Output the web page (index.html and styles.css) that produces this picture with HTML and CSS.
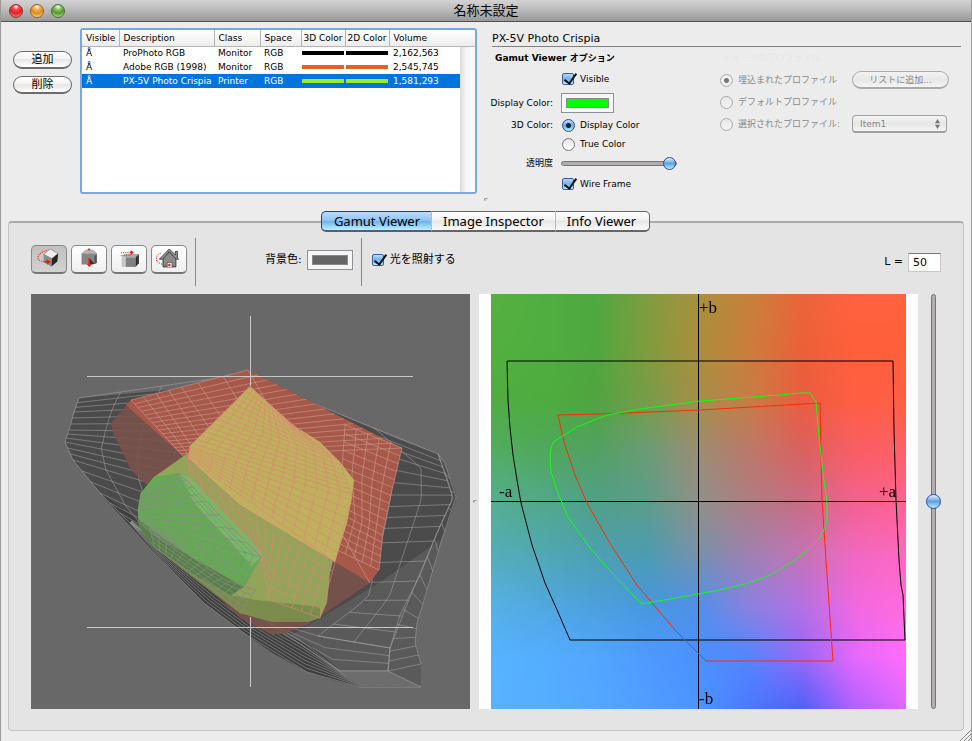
FILE: index.html
```html
<!DOCTYPE html>
<html lang="ja">
<head>
    <meta charset="UTF-8">
    <meta name="viewport" content="width=device-width, initial-scale=1.0">
    <title>名称未設定</title>
    <link rel="stylesheet" href="styles.css">
</head>
<body>
    <header class="titlebar">
        <div class="lights">
            <button class="light red" aria-label="Close"></button>
            <button class="light yellow" aria-label="Minimize"></button>
            <button class="light green" aria-label="Zoom"></button>
        </div>
        <h1>名称未設定</h1>
    </header>

    <section class="top">
        <div class="list-buttons">
            <button class="pill">追加</button>
            <button class="pill">削除</button>
        </div>

        <div class="profile-list">
            <table>
                <colgroup>
                    <col class="c-visible"><col class="c-desc"><col class="c-class"><col class="c-space">
                    <col class="c-color"><col class="c-color"><col>
                </colgroup>
                <thead>
                    <tr><th>Visible</th><th>Description</th><th>Class</th><th>Space</th><th>3D Color</th><th>2D Color</th><th>Volume</th></tr>
                </thead>
                <tbody>
                    <tr><td>Å</td><td>ProPhoto RGB</td><td>Monitor</td><td>RGB</td><td class="swatch black"><i></i></td><td class="swatch black"><i></i></td><td>2,162,563</td></tr>
                    <tr><td>Å</td><td>Adobe RGB (1998)</td><td>Monitor</td><td>RGB</td><td class="swatch orange"><i></i></td><td class="swatch orange"><i></i></td><td>2,545,745</td></tr>
                    <tr class="selected"><td>Å</td><td>PX-5V Photo Crispia</td><td>Printer</td><td>RGB</td><td class="swatch lime"><i></i></td><td class="swatch lime"><i></i></td><td>1,581,293</td></tr>
                </tbody>
            </table>
            <div class="scroll-track"></div>
        </div>

        <div class="options">
            <h2>PX-5V Photo Crispia</h2>
            <div class="option-columns">
                <div class="viewer-options">
                    <h3>Gamut Viewer オプション</h3>
                    <div class="form-grid">
                        <span></span>
                        <label class="check"><input type="checkbox" checked>Visible</label>
                        <label for="display-color">Display Color:</label>
                        <button class="well" id="display-color" aria-label="Display Color"><i class="fill-green"></i></button>
                        <span>3D Color:</span>
                        <label class="radio"><input type="radio" name="color3d" checked>Display Color</label>
                        <span></span>
                        <label class="radio"><input type="radio" name="color3d">True Color</label>
                        <label for="opacity">透明度</label>
                        <input class="slider" type="range" id="opacity" min="0" max="100" value="100">
                        <span></span>
                        <label class="check"><input type="checkbox" checked>Wire Frame</label>
                    </div>
                </div>
                <div class="image-options">
                    <h3>イメージのプロファイル</h3>
                    <div class="image-grid">
                        <label class="radio"><input type="radio" name="profile" checked disabled>埋込まれたプロファイル</label>
                        <button class="pill" disabled>リストに追加...</button>
                        <label class="radio"><input type="radio" name="profile" disabled>デフォルトプロファイル</label>
                        <span></span>
                        <label class="radio"><input type="radio" name="profile" disabled>選択されたプロファイル:</label>
                        <div class="popup">
                            <select disabled aria-label="プロファイル"><option>Item1</option></select>
                            <svg viewBox="0 0 6 12"><path d="M3 0 6 5H0zM3 12 6 7H0z"/></svg>
                        </div>
                    </div>
                </div>
            </div>
        </div>
    </section>

    <div class="splitter"><i></i></div>

    <main class="panel">
        <nav class="tabs">
            <button class="active">Gamut Viewer</button>
            <button>Image Inspector</button>
            <button>Info Viewer</button>
        </nav>

        <div class="toolbar">
            <div class="tools">
                <button class="tool pressed" aria-label="Rotate">
                    <svg viewBox="0 0 108 87">
                        <path fill="#eee" stroke="#777" stroke-width="2" d="M36 28 58 10 84 25 64 42z"/>
                        <path fill="#8c8c8c" d="M36 28 64 42 62 69 36 54z"/>
                        <path fill="#262626" d="M64 42 85 25 82 52 62 69z"/>
                        <path class="dots" d="M46 15C30 18 16 30 17 40S30 52 44 53"/>
                        <path fill="#f21a00" d="M46 44 61 53 48 62v-6h-8v-6h6z"/>
                    </svg>
                </button>
                <button class="tool" aria-label="Move vertical">
                    <svg viewBox="0 0 108 87">
                        <path fill="#b4b4b4" stroke="#8a8a8a" stroke-width="2" d="M30 26 42 14H68L80 26z"/>
                        <path fill="#868686" d="M29 26H80V57L68 62H29z"/>
                        <path fill="#333" d="M57 42 73 60H57z"/>
                        <path fill="#555" d="M72 34 80 28V57L72 60z"/>
                        <path fill="#f21a00" d="M54 7 60 14H48zM52 40h5v20h7l-9 10-9-10h6z"/>
                    </svg>
                </button>
                <button class="tool" aria-label="Move horizontal">
                    <svg viewBox="0 0 108 87">
                        <path fill="#c8c8c8" d="M29 32 43 36V70H29z"/>
                        <path fill="#aaa" d="M29 32 42 27H87L76 38H43z"/>
                        <path fill="#808080" d="M43 38H76V70H43z"/>
                        <path fill="#2e2e2e" d="M76 38 87 27V58L76 70z"/>
                        <path class="dots" d="M28 22H56"/>
                        <path fill="#f21a00" d="M56 19H60V13L70 22 60 31V24H56z"/>
                        <path fill="none" stroke="#444" stroke-width="2" stroke-dasharray="3 3" d="M26 31H60"/>
                    </svg>
                </button>
                <button class="tool" aria-label="Home">
                    <svg viewBox="0 0 108 87">
                        <path fill="#8a8a8a" stroke="#333" stroke-width="3" d="M34 40V70H77V40L55 20z"/>
                        <path fill="#999" stroke="#333" stroke-width="3" d="M75 30V18H82V40L86 44H78L55 19 33 44H22L55 10 75 30"/>
                        <path fill="#fff" stroke="#333" stroke-width="2" d="M48 70V55H64V70"/>
                        <path stroke="#f21a00" stroke-width="4" d="M50 64H60M55 59V69"/>
                        <path class="dots" d="M26 25C16 28 11 34 12 44S24 60 44 64"/>
                    </svg>
                </button>
            </div>
            <div class="background-color">
                <label for="bg-color">背景色:</label>
                <button class="well" id="bg-color" aria-label="背景色"><i class="fill-gray"></i></button>
            </div>
            <label class="check large"><input type="checkbox" checked>光を照射する</label>
            <div class="lightness">
                <label for="l-value">L =</label>
                <input type="text" id="l-value" value="50">
            </div>
        </div>

        <div class="viewers">
            <svg class="gamut3d" viewBox="31 294 439 415" role="img" aria-label="3D gamut">
                <!-- ProPhoto RGB -->
                <path fill="#4b4b4b" d="M79 398 190 388 250 373 310 402 400 440 438 454 445 464 456 494 456 500 440 545 427 590 417 623 415 643 421 664 421 687H360L340 682 307 672 273 653 244 633 204 603 174 573 148 545 100 493 73 460 65 442z"/>
                <path fill="#5a5a5a" d="M379 583 440 540 427 590 417 623 415 643 421 664V687H360L318 660 290 636z"/>
                <path fill="#3e3e3e" d="M100 493 140 520 190 570 250 615 310 645 360 687 340 682 307 672 273 653 244 633 204 603 174 573 148 545z"/>
                <g id="wire-black" class="wire light"></g>
                <!-- Adobe RGB -->
                <path fill="#79524a" fill-opacity=".9" d="M131 400 248 370 402 448 392 490 383 533 379 570 370 583 327 612 307 625 283 634H270L240 618 218 597 147 485 131 470 113 433 111 423z"/>
                <path fill="#ab5948" fill-opacity=".95" d="M131 400 248 370 402 448 392 490 383 533 379 570 370 583 335 562 184 457 126 405z"/>
                <g id="wire-red" class="wire pink"></g>
                <!-- printer profile -->
                <path fill="#93a358" d="M188 453 154 477 141 493 138 510 139 527 154 547 198 577 231 595 240 613 273 622H307L320 618 327 603 330 573 337 543 270 500z"/>
                <path fill="#7c8c4c" d="M154 547 198 577 231 595 256 600 320 607 320 618 307 622H273L240 613z"/>
                <path fill="#c0b05e" d="M250 386 190 446 188 458 240 505 335 562 347 523 352 497 354 480 340 462 320 442 293 425z"/>
                <path fill="#63ab50" d="M141 493 154 477 179 473 191 486 261 557 244 587 231 595 198 577 154 547 139 527 138 510z"/>
                <path fill="#577f48" d="M139 520 190 556 244 587 231 595 198 577 154 547 139 527z"/>
                <path fill="#77b866" d="M179 473 191 478 261 551V557L252 566 196 506z"/>
                <g id="wire-yellow" class="wire rose"></g>
                <g id="wire-green" class="wire gray"></g>
                <path class="axes" d="M87 376H413M250 316V386M87 627H413M250 617V687"/>
            </svg>

            <div class="divider"><i></i></div>

            <div class="ab-plane">
                <canvas id="ab-colors" width="415" height="415"></canvas>
                <svg viewBox="491 294 415 415" role="img" aria-label="a-b plane">
                    <path class="crisp" stroke="#000" d="M491 501H906M698 294V709"/>
                    <path stroke="#000" d="M507 361 508 400 510 428 513 455 517 480 521 503 532 545 545 583 558 612 570 640H905L903 595 901 585 899 560 896 500 894 430 893 361z"/>
                    <path stroke="#ff2a08" d="M558 415 564 442 575 475 587 503 611 545 637 585 675 630 706 661H833L826 560 822 500 820 403 700 410 600 414z"/>
                    <path stroke="#10ff10" d="M553 442 551 448 550 457 551 472 558 493 568 517 590 548 612 573 642 604 720 590 745 584 763 578 778 571 790 563 802 555 810 548 818 540 823 532 826 524 827 520V503L823 473 819 437 816 402 810 393H800L780 395 700 401 640 409 607 415 577 427z"/>
                    <text x="699" y="313">+b</text>
                    <text x="699" y="704">-b</text>
                    <text x="499" y="497">-a</text>
                    <text x="879" y="497">+a</text>
                </svg>
            </div>

            <input class="slider vertical" type="range" min="0" max="100" value="50" aria-label="L">
        </div>
    </main>

    <svg class="grip" viewBox="0 0 12 12"><path d="M1 12 12 1M5 12 12 5M9 12 12 9"/></svg>

    <script src="script.js"></script>
</body>
</html>
```
FILE: styles.css
```css
* {
    box-sizing: border-box;
}
body {
    margin: 0;
    min-height: 100vh;
    background: #ececec;
    border: solid #9a9a9a;
    border-width: 0 1px;
    font-family: "DejaVu Sans", "Noto Sans CJK JP", sans-serif;
    font-size: 9px;
    line-height: 14px;
    color: #000;
}
h1, h2, h3 {
    margin: 0;
    font-weight: normal;
}
button, input, select {
    font: inherit;
    color: inherit;
    margin: 0;
    padding: 0;
}

/* title bar */
.titlebar {
    display: grid;
    grid-template-columns: 1fr auto 1fr;
    align-items: center;
    height: 22px;
    margin: 0 -1px;
    background: linear-gradient(#d2d2d2, #c4c4c4 30%, #999);
    border-bottom: 1px solid #515151;
}
.titlebar h1 {
    font-size: 13px;
    line-height: 20px;
}
.lights {
    display: flex;
    gap: 7px;
    padding-left: 9px;
}
.light {
    width: 14px;
    height: 14px;
    border: 1px solid #666;
    border-radius: 50%;
}
.red {
    background: radial-gradient(circle at 50% 15%, #fff 0, #f45 25%, #d22 55%, #fa9c98 100%);
    border-color: #8c3030;
}
.yellow {
    background: radial-gradient(circle at 50% 15%, #fff 0, #f6b04c 25%, #e08a20 55%, #ffe9a0 100%);
    border-color: #94602a;
}
.green {
    background: radial-gradient(circle at 50% 15%, #fff 0, #8cc860 25%, #559a30 55%, #d0f4a0 100%);
    border-color: #44702c;
}

/* profile list and its options */
.top {
    display: flex;
    padding: 6px 10px 0 12px;
}
.list-buttons {
    display: flex;
    flex-direction: column;
    gap: 7px;
    padding-top: 23px;
    margin-right: 8px;
}
.pill {
    width: 59px;
    height: 18px;
    border: 1px solid #6c6c6c;
    border-width: 1px 1px 2px;
    border-radius: 9px;
    background: linear-gradient(#fff, #f4f4f4 45%, #e6e6e6 50%, #fff);
    font-size: 11px;
    line-height: 14px;
}
.pill:disabled {
    width: 97px;
    border-color: #aaa;
    background: linear-gradient(#f2f2f2, #e8e8e8 50%, #f4f4f4);
    color: #8a8a8a;
    font-size: 9px;
}
.profile-list {
    display: flex;
    flex: 0 1 397px;
    height: 166px;
    position: relative;
    border: 2px solid #7aa8dc;
    border-radius: 3px;
    background: #fff;
}
table {
    width: 100%;
    align-self: flex-start;
    border-collapse: collapse;
    table-layout: fixed;
    white-space: nowrap;
}
.c-visible { width: 37px; }
.c-desc { width: 95px; }
.c-class { width: 46px; }
.c-space { width: 41px; }
.c-color { width: 44px; }
th {
    height: 16px;
    padding: 0 0 0 4px;
    border-right: 1px solid #b4b4b4;
    border-bottom: 1px solid #b4b4b4;
    background: linear-gradient(#fff, #f6f6f6 50%, #ececec);
    font-weight: normal;
    text-align: left;
    line-height: 14px;
}
th:nth-child(5), th:nth-child(6) {
    padding-left: 2px;
}
th:last-child {
    border-right: 0;
}
td {
    height: 14px;
    padding: 0 0 0 4px;
    line-height: 13px;
}
.selected td {
    background: #0274dd;
    color: #fff;
}
.swatch {
    padding: 0 1px;
}
.swatch i {
    display: block;
    height: 4px;
}
.black i { background: #000; }
.orange i { background: #e6611b; }
.lime i { background: #97ec2c; }
.scroll-track {
    position: absolute;
    top: 17px;
    right: 0;
    bottom: 0;
    width: 15px;
    background: linear-gradient(90deg, #ddd, #f4f4f4 40%, #fff);
}
.options {
    flex: 1;
    padding: 3px 0 0 15px;
}
.options h2 {
    font-size: 11px;
    line-height: 15px;
    border-bottom: 1px solid #808080;
}
.option-columns {
    display: flex;
    justify-content: space-between;
}
.options h3 {
    padding: 4px 0 0 3px;
    font-size: 9px;
    font-weight: bold;
}
.viewer-options {
    flex: 0 1 188px;
}
.form-grid {
    display: grid;
    grid-template-columns: 61px 1fr;
    grid-template-rows: 28px 20px 24px 14px 24px 18px;
    column-gap: 8px;
    align-items: center;
}
.form-grid > :nth-child(odd) {
    justify-self: end;
    white-space: nowrap;
}
.image-options {
    flex: 0 1 242px;
}
.options .image-options h3 {
    color: #e7e7e7;
    font-weight: normal;
}
.image-grid {
    display: grid;
    grid-template-columns: 1fr 109px;
    grid-template-rows: 30px 14px 30px;
    align-items: center;
    color: #8a8a8a;
    white-space: nowrap;
}
.check, .radio {
    display: flex;
    align-items: center;
    gap: 5px;
}
input[type="checkbox"], input[type="radio"] {
    appearance: none;
    flex: none;
    width: 13px;
    height: 13px;
    margin-left: 1px;
    border: 1px solid #777;
    background: linear-gradient(#e4e4e4, #fff);
}
input[type="checkbox"] {
    position: relative;
    width: 12px;
    height: 12px;
    margin-right: 1px;
    border-radius: 2px;
}
input[type="checkbox"]:checked {
    border-color: #3d5f9c;
    background: linear-gradient(#b8d6f4, #6fb2f0 50%, #b8f0ff);
}
input[type="checkbox"]:checked::after {
    content: "";
    position: absolute;
    left: 4px;
    top: -3px;
    width: 5px;
    height: 11px;
    border: solid #111;
    border-width: 0 2px 2px 0;
    transform: rotate(36deg);
}
input[type="radio"] {
    border-radius: 50%;
}
input[type="radio"]:checked {
    border-color: #2f4c90;
    background: radial-gradient(circle, #123 0 2px, transparent 3px), linear-gradient(#c4dcf8, #69abee 50%, #b4f0ff);
}
input[type="radio"]:disabled {
    border-color: #aaa;
    background: linear-gradient(#e8e8e8, #f4f4f4);
}
input[type="radio"]:checked:disabled {
    background: radial-gradient(circle, #777 0 2px, #eee 3px);
}
.well {
    display: flex;
    width: 53px;
    height: 20px;
    padding: 4px;
    border: 1px solid #8e9298;
    background: #f6f6f6;
}
.well i {
    flex: 1;
    height: 10px;
    border: 1px solid #888;
}
.fill-green { background: #0f0; }
.fill-gray { background: #666; }
.slider {
    appearance: none;
    width: 116px;
    height: 14px;
    background: none;
}
.slider::-webkit-slider-runnable-track {
    height: 5px;
    border: 1px solid #777;
    border-radius: 3px;
    background: #b2aeae;
}
.slider::-webkit-slider-thumb {
    appearance: none;
    width: 13px;
    height: 13px;
    margin-top: -5px;
    border: 1px solid #2c4b94;
    border-radius: 50%;
    background: linear-gradient(#e4f2ff, #5fa0e4 50%, #b6ecff);
}
.popup {
    position: relative;
    width: 95px;
}
.popup select {
    display: block;
    appearance: none;
    width: 100%;
    height: 18px;
    padding: 0 7px;
    border: 1px solid #a0a0a0;
    border-bottom-width: 2px;
    border-radius: 4px;
    background: linear-gradient(#f4f4f4, #e6e6e6 50%, #f4f4f4);
    opacity: 1;
}
.popup svg {
    position: absolute;
    right: 7px;
    top: 4px;
    height: 10px;
    fill: #777;
}
.splitter {
    display: flex;
    justify-content: center;
    height: 17px;
    padding-top: 4px;
}
.splitter i, .divider i {
    width: 4px;
    height: 3px;
    border: solid #888;
    border-width: 1px 0 0 1px;
    border-radius: 50%;
}

/* tab panel */
.panel {
    margin: 10px 7px 9px;
    padding: 0 20px 21px 22px;
    background: #e4e4e4;
    border: 1px solid #c4c4c4;
    border-top: 2px solid #ababab;
    border-radius: 4px;
}
.tabs {
    display: flex;
    justify-content: center;
    position: relative;
    top: -12px;
    margin-bottom: -12px;
    padding-right: 3px;
}
.tabs button {
    height: 21px;
    padding: 0 11px;
    border: 1px solid #666;
    border-left-color: #bbb;
    border-right: 0;
    border-bottom-width: 2px;
    background: linear-gradient(#fff, #f2f2f2 45%, #e6e6e6 50%, #fafafa);
    font-family: "Noto Sans", sans-serif;
    font-size: 13px;
    line-height: 18px;
}
.tabs button.active {
    padding: 0 11px 0 12px;
    border-color: #24408c #7d9cc4 #4d5f80 #24408c;
    border-radius: 5px 0 0 5px;
    background: linear-gradient(#bddbf8, #8cc3f6 50%, #6cb2f2 52%, #bdf2ff);
}
.tabs button:last-child {
    padding-right: 13px;
    border-right: 1px solid #666;
    border-radius: 0 5px 5px 0;
}
.toolbar {
    display: flex;
    align-items: center;
    height: 48px;
    margin: 6px 2px 8px 0;
    font-size: 11px;
}
.tools {
    display: flex;
    align-items: center;
    align-self: stretch;
    gap: 4px;
    padding: 0 8px 5px 0;
    border-right: 1px solid #888;
}
.tool {
    width: 36px;
    height: 29px;
    border: 1px solid #888;
    border-bottom: 2px solid #777;
    border-radius: 5px;
    background: linear-gradient(#fff, #efefef);
}
.tool.pressed {
    background: linear-gradient(#c0c0c0, #d2d2d2);
}
.tool svg {
    display: block;
    width: 100%;
    height: 100%;
}
.dots {
    fill: none;
    stroke: #f21a00;
    stroke-width: 4;
    stroke-dasharray: 3 4;
}
.background-color {
    display: flex;
    align-items: center;
    align-self: stretch;
    gap: 5px;
    padding: 0 8px 5px 69px;
    border-right: 1px solid #888;
}
.background-color .well {
    width: 46px;
}
.large {
    padding: 0 0 5px 9px;
}
.lightness {
    display: flex;
    align-items: center;
    gap: 5px;
    margin-left: auto;
}
.lightness input {
    width: 33px;
    height: 19px;
    padding-left: 4px;
    border: 1px solid #c8c8c8;
    border-top: 1px solid #777;
    background: #fff;
}
.viewers {
    display: grid;
    grid-template-columns: 1fr 9px 1fr 25px;
}
.gamut3d {
    display: block;
    width: 100%;
    background: #686868;
}
.divider {
    display: flex;
    align-items: center;
    justify-content: center;
}
.ab-plane {
    display: grid;
    padding: 0 12px;
    background: #fff;
}
.ab-plane canvas, .ab-plane svg {
    display: block;
    grid-area: 1 / 1;
    width: 100%;
}
.ab-plane path {
    fill: none;
}
.crisp {
    shape-rendering: crispEdges;
}
.ab-plane text {
    font-family: "Liberation Serif", serif;
    font-size: 17px;
}
.vertical {
    writing-mode: vertical-lr;
    direction: rtl;
    width: 16px;
    height: 100%;
    margin-left: 7px;
}
.vertical::-webkit-slider-runnable-track {
    width: 5px;
    height: 100%;
}
.vertical::-webkit-slider-thumb {
    width: 15px;
    height: 15px;
    margin: 0 0 0 -6px;
}
.wire {
    fill: none;
    stroke-width: 1;
}
.light.wire { height: auto; stroke: #aaa; stroke-opacity: .5; }
.pink { stroke: #d0a8a0; stroke-opacity: .5; }
.rose { stroke: #dc8478; stroke-opacity: .6; }
.gray { stroke: #858c80; stroke-opacity: .8; }
.axes {
    stroke: #d4d4d4;
    stroke-opacity: .9;
    shape-rendering: crispEdges;
}
.grip {
    position: absolute;
    right: 1px;
    bottom: 0;
    width: 12px;
    height: 12px;
    stroke: #888;
}
```
FILE: script.js
```js
// colours of the a-b plane at L = 50, one row per b value
const planeColors = [
    ['55b040', '50ae40', '4ea840', '7f9c40', 'a8903d', 'c8803c', 'ea643a', 'ff6240', 'ff623f'],
    ['52b040', '50ae40', '4ea83e', '7f9c3c', 'ac8e3c', 'cc7c3c', 'ec6038', 'ff5f3a', 'ff5f3a'],
    ['50ac42', '4eac3e', '50a440', '789c48', 'a68e48', 'c87c44', 'ea5c40', 'ff5e42', 'ff5f42'],
    ['52ac60', '50a85c', '52a062', '6a9c74', '9c8c74', 'bc7868', 'dc6060', 'f85e64', 'ff5f68'],
    ['54ae90', '52a88a', '50a088', '5c9c8c', '909088', 'b07c84', 'c86c84', 'f46090', 'ff6290'],
    ['54acb8', '50a8b4', '4ca0b0', '4c9cb0', '7890ac', 'a080b0', 'c474b4', 'f068c0', 'ff68c0'],
    ['56b0e4', '50a8e0', '4ca0dc', '4698dc', '5090e8', '8c80e0', 'b470e4', 'f068e0', 'ff6cdc'],
    ['56b2ff', '54aeff', '52a6ff', '4e9aff', '4a90ff', '5484ff', '9868f8', 'e468fc', 'ff6cfc'],
    ['58b2ff', '56aeff', '54a8ff', '509cff', '4c94ff', '4a78ff', '4c62f8', 'b060ff', 'e068ff']
].map(row => row.map(c => [0, 2, 4].map(i => parseInt(c.substr(i, 2), 16))));

function drawPlane() {
    const canvas = document.getElementById('ab-colors');
    const ctx = canvas.getContext('2d');
    const size = canvas.width;
    const image = ctx.createImageData(size, size);
    const cells = planeColors.length - 1;
    for (let y = 0; y < size; y++) {
        const v = y / size * cells, j = Math.floor(v), fy = v - j;
        for (let x = 0; x < size; x++) {
            const u = x / size * cells, i = Math.floor(u), fx = u - i;
            for (let c = 0; c < 3; c++) {
                const top = planeColors[j][i][c] * (1 - fx) + planeColors[j][i + 1][c] * fx;
                const bottom = planeColors[j + 1][i][c] * (1 - fx) + planeColors[j + 1][i + 1][c] * fx;
                image.data[(y * size + x) * 4 + c] = top * (1 - fy) + bottom * fy;
            }
            image.data[(y * size + x) * 4 + 3] = 255;
        }
    }
    ctx.putImageData(image, 0, 0);
}

// point at t (0..1) of a polyline
function along(line, t) {
    const pos = t * (line.length - 1);
    const i = Math.min(Math.floor(pos), line.length - 2);
    const f = pos - i;
    return [line[i][0] + (line[i + 1][0] - line[i][0]) * f, line[i][1] + (line[i + 1][1] - line[i][1]) * f];
}

// net of lines between two edges: "rungs" go across, "rails" follow the edges
function net(id, a, b, rungs, rails) {
    let d = '';
    const at = (t, s) => {
        const p = along(a, t), q = along(b, t);
        return (p[0] + (q[0] - p[0]) * s).toFixed(1) + ' ' + (p[1] + (q[1] - p[1]) * s).toFixed(1);
    };
    for (let i = 0; i <= rungs; i++) {
        d += 'M' + at(i / rungs, 0) + 'L' + at(i / rungs, 1);
    }
    for (let k = 0; k <= rails && rails; k++) {
        for (let i = 0; i <= 24; i++) {
            d += (i ? 'L' : 'M') + at(i / 24, k / rails);
        }
    }
    const path = document.createElementNS('http://www.w3.org/2000/svg', 'path');
    path.setAttribute('d', d);
    document.getElementById(id).appendChild(path);
}

// ProPhoto RGB
net('wire-black', [[79, 398], [74, 412], [69, 430], [65, 442], [73, 460], [100, 493], [130, 523]],
    [[245, 374], [225, 405], [215, 432], [210, 470], [205, 500], [200, 540], [210, 575]], 18, 4);
net('wire-black', [[310, 402], [396, 460], [390, 500], [383, 535], [368, 598], [318, 636]],
    [[438, 454], [446, 475], [453, 498], [437, 533], [410, 597], [390, 648]], 16, 2);
net('wire-black', [[438, 454], [453, 498], [437, 533], [420, 575], [400, 615], [390, 648], [388, 671]],
    [[445, 464], [456, 497], [440, 545], [427, 590], [417, 623], [415, 643], [421, 664]], 14, 1);
net('wire-black', [[130, 523], [174, 573], [204, 603], [244, 633], [307, 672], [360, 687], [421, 687]],
    [[132, 521], [185, 565], [225, 592], [260, 618], [300, 640], [340, 671], [388, 671]], 1, 8);
net('wire-black', [[260, 618], [318, 636], [390, 648]],
    [[270, 624], [340, 671], [388, 671]], 1, 3);

// Adobe RGB
net('wire-red', [[131, 400], [160, 392], [190, 385], [248, 370]],
    [[184, 457], [220, 485], [290, 530], [370, 583]], 7, 0);
net('wire-red', [[248, 370], [300, 396], [350, 422], [402, 448]],
    [[131, 400], [150, 420], [167, 440], [184, 457]], 16, 0);
net('wire-red', [[402, 448], [392, 490], [383, 533], [379, 570]],
    [[345, 425], [342, 470], [348, 515], [337, 550]], 16, 5);

// printer profile
net('wire-yellow', [[250, 387], [220, 417], [190, 446], [188, 458]],
    [[293, 425], [340, 462], [352, 497], [335, 562]], 22, 14);
net('wire-yellow', [[188, 458], [240, 505], [290, 535], [335, 562]],
    [[191, 486], [261, 557], [270, 600], [320, 618]], 16, 6);
net('wire-green', [[141, 493], [138, 510], [141, 524], [154, 535]],
    [[179, 473], [206, 501], [261, 557], [244, 587]], 12, 16);
net('wire-green', [[154, 547], [180, 565], [210, 587], [240, 613]],
    [[150, 528], [190, 556], [225, 580], [256, 590]], 14, 4);

drawPlane();
```
